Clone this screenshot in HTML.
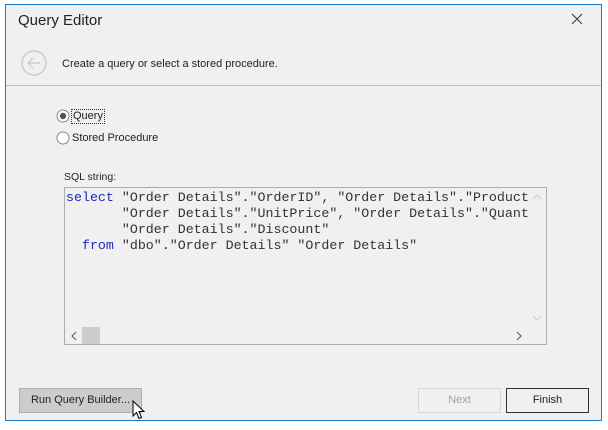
<html><head><style>
body{margin:0;width:608px;height:430px;background:#fff;position:relative;font-family:"Liberation Sans",sans-serif;overflow:hidden}
.win{position:absolute;left:5px;top:4px;width:595px;height:415px;border:1px solid #1979ca;background:#f0f0f0}
.a{position:absolute}
.btn{position:absolute;height:23px;border:1px solid #adadad;font-size:11px;text-align:center;line-height:23px;color:#222}
pre{margin:0;font-family:"Liberation Mono",monospace;font-size:13.3px;line-height:16px;color:#333}
.k{color:#1a2cb8}
</style></head><body>
<div class="win">
<div class="a" style="left:12px;top:7px;font-size:15px;color:#222">Query Editor</div>
<svg class="a" style="left:565px;top:8px" width="12" height="12"><path d="M1 1L11 11M11 1L1 11" stroke="#444" stroke-width="1.2"/></svg>
<svg class="a" style="left:14px;top:44px" width="28" height="28"><circle cx="14" cy="14" r="12" fill="none" stroke="#ccc" stroke-width="1.5"/><path d="M20 14H8M13 9L8 14L13 19" fill="none" stroke="#ccc" stroke-width="1.5"/></svg>
<div class="a" style="left:56px;top:53px;font-size:11px;color:#222">Create a query or select a stored procedure.</div>
<div class="a" style="left:0;top:80px;width:595px;height:1px;background:#c0c0c0"></div>
<svg class="a" style="left:50px;top:104px" width="14" height="14"><circle cx="7" cy="7" r="6" fill="#fff" stroke="#888"/><circle cx="7" cy="7" r="3.2" fill="#555"/></svg>
<div class="a" style="left:65px;top:104px;font-size:11px;color:#222;border:1px dotted #333;padding:0 1px;line-height:13px">Query</div>
<svg class="a" style="left:50px;top:126px" width="14" height="14"><circle cx="7" cy="7" r="6" fill="#fff" stroke="#888"/></svg>
<div class="a" style="left:66px;top:127px;font-size:11px;color:#222">Stored Procedure</div>
<div class="a" style="left:58px;top:166px;font-size:10.5px;color:#222">SQL string:</div>
<div class="a" style="left:58px;top:182px;width:481px;height:156px;border:1px solid #adadad;background:#f0f0f0;overflow:hidden">
<pre class="a" style="left:1px;top:2px;width:462px;overflow:hidden"><span class="k">select</span> "Order Details"."OrderID", "Order Details"."Product
       "Order Details"."UnitPrice", "Order Details"."Quant
       "Order Details"."Discount"
  <span class="k">from</span> "dbo"."Order Details" "Order Details"</pre>
<div class="a" style="left:463px;top:0;width:18px;height:139px;background:#f0f0f0"></div>
<svg class="a" style="left:467px;top:5px" width="10" height="8"><path d="M1 6L5 2L9 6" fill="none" stroke="#ccc"/></svg>
<svg class="a" style="left:467px;top:126px" width="10" height="8"><path d="M1 2L5 6L9 2" fill="none" stroke="#ccc"/></svg>
<div class="a" style="left:0;top:139px;width:463px;height:17px;background:#f0f0f0"></div>
<div class="a" style="left:17px;top:139px;width:18px;height:17px;background:#cdcdcd"></div>
<svg class="a" style="left:5px;top:143px" width="8" height="10"><path d="M6 1L2 5L6 9" fill="none" stroke="#555"/></svg>
<svg class="a" style="left:450px;top:143px" width="8" height="10"><path d="M2 1L6 5L2 9" fill="none" stroke="#555"/></svg>
</div>
<div class="btn" style="left:13px;top:383px;width:121px;background:#ccc">Run Query Builder...</div>
<div class="btn" style="left:412px;top:383px;width:81px;border-color:#d6d6d6;color:#a0a0a0">Next</div>
<div class="btn" style="left:500px;top:383px;width:81px;border-color:#333">Finish</div>
<svg class="a" style="left:126px;top:395px" width="14" height="22"><path d="M1 1V16L4.5 12.5L7 18.5L9.5 17.5L7 11.5H12Z" fill="#fff" stroke="#000"/></svg>
</div>
</body></html>
